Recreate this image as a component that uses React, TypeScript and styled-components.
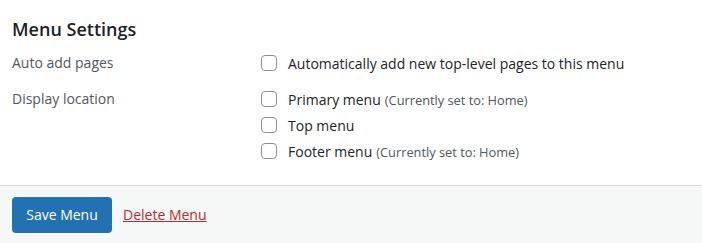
import React from "react";
import styled, { createGlobalStyle } from "styled-components";

const Global = createGlobalStyle`
  html, body { margin: 0; padding: 0; background: #fff; }
  body { font-family: "Open Sans", "Noto Sans", sans-serif; color: #1d2327; font-size: 14px; }
`;

const Panel = styled.div`
  width: 702px;
  height: 243px;
  display: flex;
  flex-direction: column;
  background: #fff;
`;

const Body = styled.div`
  flex: 1;
  padding: 0 12px;
`;

const Heading = styled.h3`
  margin: 0;
  padding-top: 17px;
  font-size: 18px;
  font-weight: 600;
  line-height: 24px;
  color: #1d2327;
`;

const Row = styled.div<{ $top: number }>`
  display: grid;
  grid-template-columns: 249px 1fr;
  margin-top: ${(p) => p.$top}px;
`;

const Label = styled.div`
  color: #50575e;
  font-size: 14px;
  line-height: 24px;
`;

const Options = styled.div`
  display: flex;
  flex-direction: column;
  gap: 2px;
`;

const Option = styled.label`
  display: flex;
  align-items: center;
  gap: 11px;
  height: 24px;
  font-size: 14px;
  color: #1d2327;
`;

const Box = styled.span`
  width: 16px;
  height: 16px;
  box-sizing: border-box;
  border: 1px solid #8c8f94;
  border-radius: 4px;
  background: #fff;
  flex: none;
`;

const Note = styled.span`
  font-size: 12.8px;
  color: #50575e;
  margin-left: 4px;
`;

const Footer = styled.div`
  height: 58px;
  box-sizing: border-box;
  border-top: 1px solid #dcdcde;
  background: #f6f7f7;
  display: flex;
  align-items: center;
  gap: 11px;
  padding: 0 12px;
`;

const Button = styled.button`
  width: 100px;
  height: 36px;
  border: none;
  border-radius: 4px;
  background: #2271b1;
  color: #fff;
  font-family: inherit;
  font-size: 14px;
  padding: 0;
`;

const DeleteLink = styled.a`
  color: #b32d2e;
  text-decoration: underline;
  font-size: 14px;
`;

export default function App() {
  return (
    <>
      <Global />
      <Panel>
        <Body>
          <Heading>Menu Settings</Heading>
          <Row $top={10}>
            <Label>Auto add pages</Label>
            <Options>
              <Option>
                <Box />
                Automatically add new top-level pages to this menu
              </Option>
            </Options>
          </Row>
          <Row $top={12}>
            <Label>Display location</Label>
            <Options>
              <Option>
                <Box />
                <span>
                  Primary menu<Note>(Currently set to: Home)</Note>
                </span>
              </Option>
              <Option>
                <Box />
                Top menu
              </Option>
              <Option>
                <Box />
                <span>
                  Footer menu<Note>(Currently set to: Home)</Note>
                </span>
              </Option>
            </Options>
          </Row>
        </Body>
        <Footer>
          <Button>Save Menu</Button>
          <DeleteLink href="#">Delete Menu</DeleteLink>
        </Footer>
      </Panel>
    </>
  );
}
